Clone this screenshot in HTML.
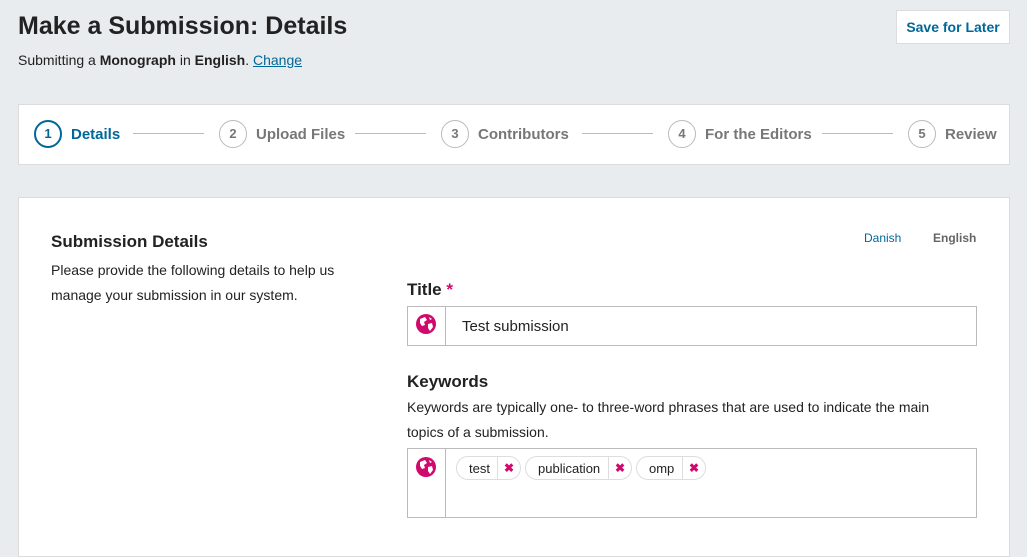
<!DOCTYPE html>
<html><head><style>
body{margin:0;width:1027px;height:539px;background:#e9ecee;font-family:"Liberation Sans",sans-serif;color:#222;position:relative;overflow:hidden}
.a{position:absolute;white-space:nowrap}
.box{position:absolute;background:#fff;border:1px solid #dcdcdc;box-sizing:border-box}
.c{position:absolute;width:28px;height:28px;border:1px solid #bbb;border-radius:50%;box-sizing:border-box;text-align:center;line-height:26px;font-size:13px;font-weight:bold;color:#777;background:#fff}
.l{position:absolute;font-size:15px;font-weight:bold;color:#777;top:126px}
.ln{position:absolute;top:133px;height:1px;background:#bbb}
.globe{position:absolute;width:20px;height:20px}
.chip{position:absolute;top:456px;height:24px;border:1px solid #ddd;border-radius:12px;box-sizing:border-box;font-size:13px;line-height:23px}
.chip span{position:absolute;top:0;height:22px;width:22px;border-left:1px solid #ddd;right:0;text-align:center;color:#d00a6c;font-weight:bold;font-size:12px}
</style></head><body>
<div class="a" style="left:18px;top:12px;font-size:25px;font-weight:bold">Make a Submission: Details</div>
<div class="a" style="left:18px;top:52px;font-size:14px">Submitting a <b>Monograph</b> in <b>English</b>. <span style="color:#006798;text-decoration:underline">Change</span></div>
<div class="box" style="left:896px;top:10px;width:114px;height:34px;font-size:14px;font-weight:bold;color:#006798;text-align:center;line-height:33px">Save for Later</div>
<div class="box" style="left:18px;top:104px;width:992px;height:61px"></div>
<div class="c" style="left:34px;top:120px;border:2px solid #006798;color:#006798;line-height:24px">1</div>
<div class="l" style="left:71px;color:#006798">Details</div>
<div class="ln" style="left:133px;width:71px"></div>
<div class="c" style="left:219px;top:120px">2</div><div class="l" style="left:256px">Upload Files</div>
<div class="ln" style="left:355px;width:71px"></div>
<div class="c" style="left:441px;top:120px">3</div><div class="l" style="left:478px">Contributors</div>
<div class="ln" style="left:582px;width:71px"></div>
<div class="c" style="left:668px;top:120px">4</div><div class="l" style="left:705px">For the Editors</div>
<div class="ln" style="left:822px;width:71px"></div>
<div class="c" style="left:908px;top:120px">5</div><div class="l" style="left:945px">Review</div>
<div class="box" style="left:18px;top:197px;width:992px;height:360px"></div>
<div class="a" style="left:51px;top:232px;font-size:17px;font-weight:bold">Submission Details</div>
<div class="a" style="left:51px;top:258px;font-size:14px;line-height:25px">Please provide the following details to help us<br>manage your submission in our system.</div>
<div class="a" style="left:864px;top:231px;font-size:12px;color:#006798">Danish</div>
<div class="a" style="left:933px;top:231px;font-size:12px;color:#666;font-weight:bold">English</div>
<div class="a" style="left:407px;top:280px;font-size:17px;font-weight:bold">Title <span style="color:#d00a6c">*</span></div>
<div class="box" style="left:407px;top:306px;width:570px;height:40px;border-color:#bbb"></div>
<div class="a" style="left:445px;top:307px;width:1px;height:38px;background:#bbb"></div>
<svg class="globe" style="left:416px;top:314px" viewBox="0 0 20 20"><circle cx="10" cy="10" r="10" fill="#d00a6c"/><path d="M4 5 L9 3 L11 6 L8 8 L9 11 L6 12 L4 9 Z M12 10 L16 9 L17 13 L14 17 L12 14 Z M13 3 L16 5 L14 6 Z" fill="#fff"/></svg>
<div class="a" style="left:462px;top:318px;font-size:15px">Test submission</div>
<div class="a" style="left:407px;top:372px;font-size:17px;font-weight:bold">Keywords</div>
<div class="a" style="left:407px;top:395px;font-size:14px;line-height:25px">Keywords are typically one- to three-word phrases that are used to indicate the main<br>topics of a submission.</div>
<div class="box" style="left:407px;top:448px;width:570px;height:70px;border-color:#bbb"></div>
<div class="a" style="left:445px;top:449px;width:1px;height:68px;background:#bbb"></div>
<svg class="globe" style="left:416px;top:457px" viewBox="0 0 20 20"><circle cx="10" cy="10" r="10" fill="#d00a6c"/><path d="M4 5 L9 3 L11 6 L8 8 L9 11 L6 12 L4 9 Z M12 10 L16 9 L17 13 L14 17 L12 14 Z M13 3 L16 5 L14 6 Z" fill="#fff"/></svg>
<div class="chip" style="left:456px;width:65px;padding-left:12px">test<span>✖</span></div>
<div class="chip" style="left:525px;width:107px;padding-left:12px">publication<span>✖</span></div>
<div class="chip" style="left:636px;width:70px;padding-left:12px">omp<span>✖</span></div>
</body></html>
